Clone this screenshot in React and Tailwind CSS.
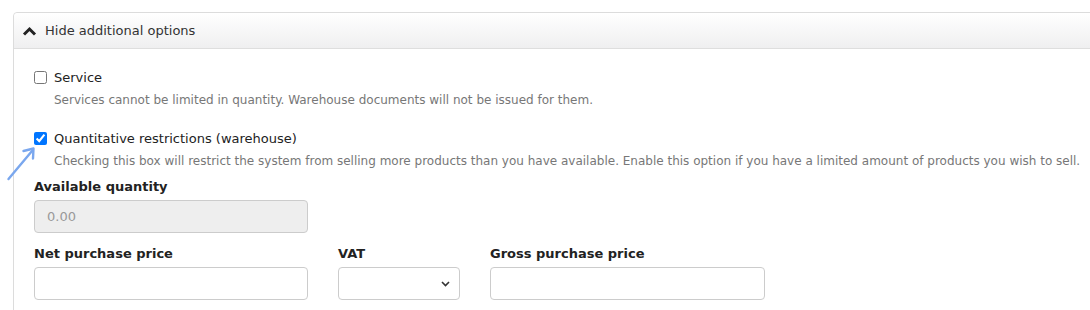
import React from 'react';

const font = { fontFamily: '"DejaVu Sans", Verdana, sans-serif' };

const Field = ({ label, width, children }) => (
  <div className="flex flex-col" style={{ width }}>
    <label className="text-[13px] font-bold text-[#222] leading-[18px] mb-[4px]">{label}</label>
    {children}
  </div>
);

const Arrow = () => (
  <svg className="absolute left-[5px] top-[145px]" width="34" height="38" viewBox="0 0 34 38">
    <path d="M3.5 34 L27 6" stroke="#7aa7ee" strokeWidth="2.4" strokeLinecap="round" fill="none" />
    <path d="M18.5 6 L28.5 3.5 L28 13.5" stroke="#7aa7ee" strokeWidth="2.4" strokeLinecap="round" strokeLinejoin="round" fill="none" />
  </svg>
);

export default function App() {
  return (
    <div className="w-[1090px] h-[310px] bg-white overflow-hidden relative pt-[12px] pl-[13px]" style={font}>
      <div className="w-[1100px] h-[320px] border border-[#dcdcdc] rounded-tl-[4px] flex flex-col">
        <div className="h-[36px] flex items-center gap-[8px] pl-[8px] border-b border-[#dedede] bg-gradient-to-b from-white to-[#efeff0] rounded-tl-[4px]">
          <svg width="15" height="10" viewBox="0 0 15 10">
            <path d="M2 8.5 L7.5 3 L13 8.5" stroke="#222" strokeWidth="3" fill="none" />
          </svg>
          <span className="text-[13px] text-[#333]">Hide additional options</span>
        </div>
        <div className="pl-[20px] pt-[20px] flex flex-col">
          <div className="flex items-start gap-[7px]">
            <input type="checkbox" className="mt-[2px] w-[13px] h-[13px]" />
            <div className="flex flex-col">
              <span className="text-[13px] text-[#222] leading-[18px]">Service</span>
              <span className="text-[12px] text-[#777] leading-[17px] mt-[5px]">Services cannot be limited in quantity. Warehouse documents will not be issued for them.</span>
            </div>
          </div>
          <div className="flex items-start gap-[7px] mt-[21px]">
            <input type="checkbox" defaultChecked className="mt-[2px] w-[13px] h-[13px] accent-[#0075ff]" />
            <div className="flex flex-col">
              <span className="text-[13px] text-[#222] leading-[18px]">Quantitative restrictions (warehouse)</span>
              <span className="text-[12px] text-[#777] leading-[17px] mt-[5px]">Checking this box will restrict the system from selling more products than you have available. Enable this option if you have a limited amount of products you wish to sell.</span>
            </div>
          </div>
          <div className="mt-[8px]">
            <Field label="Available quantity" width="274px">
              <input disabled value="0.00" readOnly className="h-[33px] border border-[#ccc] rounded-[4px] bg-[#eee] px-[12px] text-[13px] text-[#999]" />
            </Field>
          </div>
          <div className="flex gap-[30px] mt-[12px]">
            <Field label="Net purchase price" width="274px">
              <input className="h-[33px] border border-[#ccc] rounded-[4px] bg-white" />
            </Field>
            <Field label="VAT" width="122px">
              <div className="h-[33px] border border-[#ccc] rounded-[4px] bg-white flex items-center justify-end pr-[9px]">
                <svg width="9" height="6" viewBox="0 0 9 6">
                  <path d="M1 1 L4.5 4.5 L8 1" stroke="#333" strokeWidth="1.6" fill="none" />
                </svg>
              </div>
            </Field>
            <Field label="Gross purchase price" width="275px">
              <input className="h-[33px] border border-[#ccc] rounded-[4px] bg-white" />
            </Field>
          </div>
        </div>
      </div>
      <Arrow />
    </div>
  );
}
